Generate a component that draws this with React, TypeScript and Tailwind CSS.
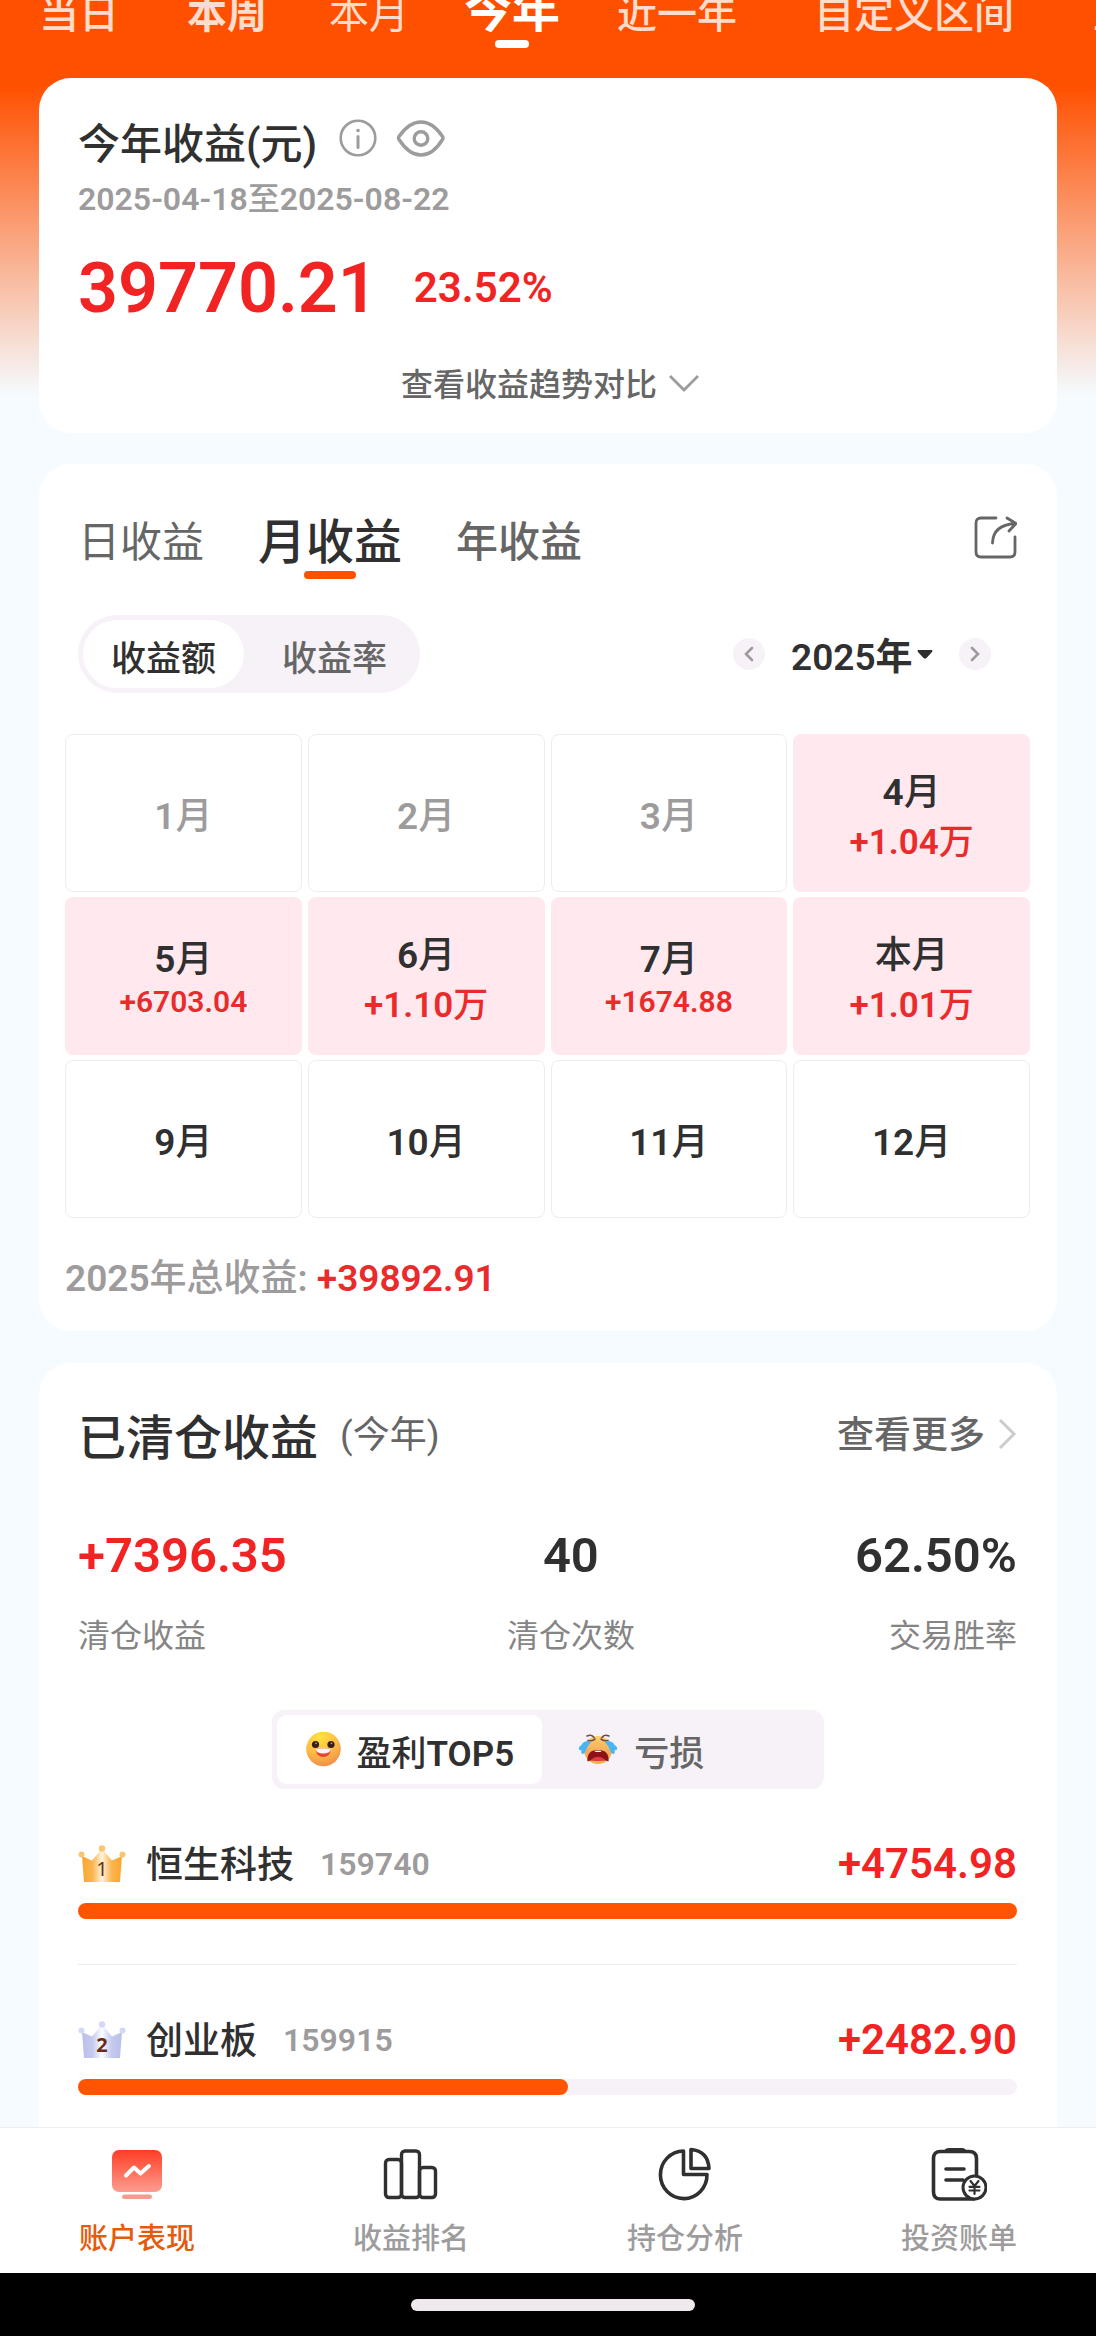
import React, { useState } from 'react';

const rangeTabs = [
  { label: '当日', className: 'w-[158px] text-[40px] font-medium' },
  { label: '本周', className: 'w-[138px] text-[40px] font-bold' },
  { label: '本月', className: 'w-[146px] text-[40px] font-normal' },
  { label: '今年', className: 'w-[140px] text-[48px] font-bold' },
  { label: '近一年', className: 'w-[190px] text-[40px] font-medium' },
  { label: '自定义区间', className: 'w-[284px] text-[40px] font-medium' },
  { label: '上月', className: 'w-[154px] text-[40px] font-medium' },
];

const months = [
  { label: '1月', muted: true },
  { label: '2月', muted: true },
  { label: '3月', muted: true },
  { label: '4月', value: '+1.04万' },
  { label: '5月', value: '+6703.04', long: true },
  { label: '6月', value: '+1.10万' },
  { label: '7月', value: '+1674.88', long: true },
  { label: '本月', value: '+1.01万' },
  { label: '9月' },
  { label: '10月' },
  { label: '11月' },
  { label: '12月' },
];

const stats = [
  { value: '+7396.35', label: '清仓收益', className: 'items-start', color: 'text-[#f22323]' },
  { value: '40', label: '清仓次数', className: 'items-center', color: 'text-[#303030]' },
  { value: '62.50%', label: '交易胜率', className: 'items-end', color: 'text-[#303030]' },
];

const topList = [
  { name: '恒生科技', code: '159740', amount: '+4754.98', percent: 100 },
  { name: '创业板', code: '159915', amount: '+2482.90', percent: 52.2 },
];

// Latin characters and digits are heavier, Chinese stays medium
const Mixed: React.FC<{ text: string }> = ({ text }) => (
  <span>
    {text.split(/([\x21-\x7e]+)/).map((part, index) => (
      index % 2 === 1 ? <b key={index} className="font-semibold">{part}</b> : part
    ))}
  </span>
);

const Crown: React.FC<{ rank: number }> = ({ rank }) => {
  const id = `crown-${rank}`;
  const edge = rank === 1 ? '#f9a72f' : '#b9c0ea';
  const dot = rank === 1 ? '#f8c670' : '#d3d8f6';
  return (
    <svg width="48" height="38" viewBox="0 0 48 38" className="shrink-0">
      <defs>
        <linearGradient id={id} x1="0" x2="1" y1="0" y2="0">
          <stop offset="0" stopColor={edge} />
          <stop offset="0.25" stopColor={edge} stopOpacity="0.85" />
          <stop offset="0.5" stopColor={rank === 1 ? '#fff6df' : '#ffffff'} />
          <stop offset="0.75" stopColor={edge} stopOpacity="0.85" />
          <stop offset="1" stopColor={edge} />
        </linearGradient>
      </defs>
      <path d="M4 11 L14 15.500 L22 6 Q24 4 26 6 L34 15.500 L44 11 L42 37 H6 Z" fill={`url(#${id})`} />
      <circle cx="3.500" cy="9.500" r="3" fill={dot} />
      <circle cx="24" cy="3.500" r="3.200" fill={dot} />
      <circle cx="44.500" cy="9.500" r="3" fill={dot} />
      <text
        x="24"
        y="31"
        textAnchor="middle"
        fontSize="20"
        fontFamily="Noto Sans, sans-serif"
        fontWeight={rank === 1 ? 400 : 700}
        fill="#6b2b18"
      >
        {rank}
      </text>
    </svg>
  );
};

const SmileFace = () => (
  <svg width="36" height="36" viewBox="0 0 36 36">
    <defs>
      <radialGradient id="smile" cx="0.4" cy="0.15" r="0.9">
        <stop offset="0" stopColor="#ffe23f" />
        <stop offset="0.55" stopColor="#fcbc45" />
        <stop offset="1" stopColor="#f08a4c" />
      </radialGradient>
    </defs>
    <circle cx="18.500" cy="17" r="17.300" fill="url(#smile)" />
    <circle cx="10.500" cy="12.500" r="3.600" fill="#3a1d1a" />
    <circle cx="26" cy="12.500" r="3.600" fill="#3a1d1a" />
    <circle cx="11" cy="11.300" r="0.900" fill="#b89a90" />
    <circle cx="26.500" cy="11.300" r="0.900" fill="#b89a90" />
    <path d="M10.500 17 Q18 15.500 26 17 Q25 25 18.200 25 Q11.500 25 10.500 17 Z" fill="#e8432e" />
    <path d="M10.500 17 Q18 15.500 26 17 Q25 21.500 18.200 21.500 Q11.500 21.500 10.500 17 Z" fill="#fff4fb" />
  </svg>
);

const CryFace = () => (
  <svg width="40" height="36" viewBox="0 0 40 36">
    <defs>
      <linearGradient id="cry" x1="0" x2="0" y1="0" y2="1">
        <stop offset="0" stopColor="#fcd06a" />
        <stop offset="0.6" stopColor="#f5a95a" />
        <stop offset="1" stopColor="#f2b250" />
      </linearGradient>
    </defs>
    <circle cx="20" cy="18" r="14" fill="url(#cry)" />
    <path d="M9 4 Q14 2 16 5.500 M31 4 Q26 2 24 5.500 M10 8.500 Q15 9.500 17 7 M30 8.500 Q25 9.500 23 7" fill="none" stroke="#6e4a45" strokeWidth="1.600" strokeLinecap="round" />
    <path d="M11 9 Q5 9 3.500 13 Q0 15 1 17.500 Q2 18.500 3.500 18 Q2.500 21.500 4.500 22 Q7 22 8 18 Q9.500 13.500 13 10.500 Z" fill="#49b5f5" />
    <path d="M29 9 Q35 9 36.500 13 Q40 15 39 17.500 Q38 18.500 36.500 18 Q37.500 21.500 35.500 22 Q33 22 32 18 Q30.500 13.500 27 10.500 Z" fill="#49b5f5" />
    <path d="M9.500 29.500 Q8.500 18 20 18 Q31.500 18 30.500 29.500 Q26 27.500 20 29 Q14 27.500 9.500 29.500 Z" fill="#8c1216" />
    <path d="M12.500 28 Q20 21.500 27.500 28 Q20 30 12.500 28 Z" fill="#e23b45" />
    <path d="M16.500 19 Q20 17.800 23.500 19 L22.500 20 H17.500 Z" fill="#fff" />
  </svg>
);

const PerformanceIcon = () => (
  <svg width="56" height="56" viewBox="0 0 56 56">
    <defs>
      <linearGradient id="perf" x1="0" x2="0" y1="0" y2="1">
        <stop offset="0" stopColor="#ff3d24" />
        <stop offset="1" stopColor="#fc9d90" />
      </linearGradient>
    </defs>
    <rect x="3" y="3" width="50" height="42" rx="7" fill="url(#perf)" />
    <path d="M17 28.500 L25 20.500 L31.500 26.500 L40 19" fill="none" stroke="#fff" strokeWidth="4" strokeLinecap="round" strokeLinejoin="round" />
    <rect x="13" y="47.500" width="30" height="4.500" rx="2.200" fill="#fa9a8d" />
  </svg>
);

const RankIcon = () => (
  <svg width="56" height="56" viewBox="0 0 56 56" fill="none" stroke="#303030" strokeWidth="3.400" strokeLinejoin="round">
    <rect x="2.500" y="12.500" width="16" height="38" rx="3.500" />
    <rect x="18.500" y="4" width="18" height="46.500" rx="3.500" />
    <rect x="36.500" y="20.500" width="16" height="30" rx="3.500" />
  </svg>
);

const PieIcon = () => (
  <svg width="56" height="56" viewBox="0 0 56 56" fill="none" stroke="#303030" strokeWidth="3.600" strokeLinejoin="round">
    <path d="M26.500 4 A23.300 23.800 0 1 0 50 27.500 H26.500 Z" />
    <path d="M34 2.500 V21.500 H52 Q51 4 34 2.500 Z" />
  </svg>
);

const BillIcon = () => (
  <svg width="56" height="56" viewBox="0 0 56 56" fill="none" stroke="#303030" strokeWidth="3.600" strokeLinecap="round" strokeLinejoin="round">
    <path d="M43 52 H9.500 Q2.500 52 2.500 45 V11.500 Q2.500 4.500 9.500 4.500 H38 Q45.500 4.500 45.500 11.500 V28" />
    <path d="M14 4.800 Q14.500 2 18 2 H31 Q34 2 34.500 4.800 Z" fill="#303030" strokeWidth="2" />
    <path d="M15 22 H33 M15 33 H32" />
    <circle cx="43.500" cy="40.500" r="11.500" fill="#fff" strokeWidth="3" />
    <path d="M39.500 34 L43.500 39 L47.500 34 M43.500 39 V47 M38.500 39.800 H48.500 M38.500 43.500 H48.500" strokeWidth="2.200" />
  </svg>
);

const navItems = [
  { label: '账户表现', icon: <PerformanceIcon /> },
  { label: '收益排名', icon: <RankIcon /> },
  { label: '持仓分析', icon: <PieIcon /> },
  { label: '投资账单', icon: <BillIcon /> },
];

const App: React.FC = () => {
  const [range, setRange] = useState('今年');
  const [metric, setMetric] = useState('收益额');
  const [board, setBoard] = useState('盈利');
  const [page, setPage] = useState('账户表现');

  return (
    <div className="flex h-screen flex-col overflow-hidden bg-[#f5fbff] font-['Roboto','Noto_Sans_CJK_SC',sans-serif] font-medium text-[#303030]">
      <main className="flex min-h-0 flex-1 flex-col overflow-hidden bg-[linear-gradient(to_bottom,#ff5000_85px,#f5fbff_395px)]">
        {/* Date range tabs */}
        <div className="flex h-[78px] shrink-0 items-start overflow-hidden">
          {rangeTabs.map((tab) => (
            <button
              key={tab.label}
              type="button"
              onClick={() => setRange(tab.label)}
              className={`relative -mt-2 h-14 shrink-0 whitespace-nowrap leading-[46px] ${tab.className} ${range === tab.label ? 'text-white' : 'text-[#ffdccb]'}`}
            >
              <span className={range === tab.label ? 'block -mt-2 h-14' : 'block h-14'}>{tab.label}</span>
              {range === tab.label && <span className="absolute bottom-0 left-1/2 h-2 w-[34px] -translate-x-1/2 rounded-full bg-white" />}
            </button>
          ))}
        </div>

        {/* Summary card */}
        <section className="mx-[39px] flex shrink-0 flex-col rounded-[32px] bg-white px-[39px] pb-7 pt-[39px]">
          <div className="flex items-start">
            <h1 className="text-[42px] font-medium leading-[56px]">今年收益(元)</h1>
            <button type="button" aria-label="说明" className="ml-[22px] flex h-[42px] items-center">
              <svg width="38" height="38" viewBox="0 0 38 38" fill="none" stroke="#9d9b9c">
                <circle cx="19" cy="19" r="17.300" strokeWidth="2.600" />
                <circle cx="19" cy="11.500" r="1.800" fill="#9d9b9c" stroke="none" />
                <path d="M19 17.500 V28.500" strokeWidth="3" strokeLinecap="round" />
              </svg>
            </button>
            <button type="button" aria-label="隐藏金额" className="ml-[18px] flex h-[42px] items-center">
              <svg width="50" height="38" viewBox="0 0 50 38" fill="none" stroke="#9d9b9c" strokeWidth="3.400">
                <path d="M4 17.500 Q14 3 26 3 Q38 3 47.500 17.500 Q48.500 19 47.500 20.500 Q38 36 26 36 Q14 36 4 20.500 Q3 19 4 17.500 Z" />
                <circle cx="26" cy="19.500" r="6.800" />
              </svg>
            </button>
          </div>
          <p className="mt-1 text-[32px] leading-[44px] text-[#9d9b9c]"><Mixed text="2025-04-18至2025-08-22" /></p>
          <div className="mt-[27px] flex items-center gap-9 font-semibold text-[#f22323]">
            <span className="text-[70px] leading-[80px]">39770.21</span>
            <span className="text-[42px] leading-[56px]">23.52%</span>
          </div>
          <button type="button" className="mt-[37px] flex items-center gap-3 self-center pl-1 text-[32px] leading-[40px] text-[#666]">
            查看收益趋势对比
            <svg width="30" height="20" viewBox="0 0 30 20" fill="none" stroke="#9d9b9c" strokeWidth="2.800">
              <path d="M1 1 L15 15 L29 1" />
            </svg>
          </button>
        </section>

        {/* Calendar card */}
        <section className="mx-[39px] mt-[31px] shrink-0 rounded-[32px] bg-white pb-7 pl-[26px] pr-[27px] pt-[51px]">
          <div className="flex items-start px-[13px]">
            <div className="flex h-[65px] flex-1 items-start gap-[54px] leading-[56px] text-[#666]">
              <button type="button" className="text-[42px] font-normal">日收益</button>
              <button type="button" className="flex flex-col items-center text-[48px] text-[#303030]">
                月收益
                <span className="h-2 w-[52px] rounded-full bg-[#ff5000]" />
              </button>
              <button type="button" className="text-[42px]">年收益</button>
            </div>
            <button type="button" aria-label="分享">
              <svg width="44" height="44" viewBox="0 0 44 44" fill="none" stroke="#666" strokeWidth="2.800" strokeLinecap="round" strokeLinejoin="round">
                <path d="M23 3 H8 Q3 3 3 8 V37 Q3 42 8 42 H37 Q42 42 42 37 V22" />
                <path d="M19.500 28 Q20 10 42 8.500 M34 3 L43 8.500 L36 16" />
              </svg>
            </button>
          </div>

          <div className="mt-[35px] flex items-center px-[13px]">
            <div className="flex gap-[10px] rounded-full bg-[#f6f2f7] p-[5px]">
              {['收益额', '收益率'].map((item) => (
                <button
                  key={item}
                  type="button"
                  onClick={() => setMetric(item)}
                  className={`h-[68px] rounded-full px-7 pt-3 text-[35px] leading-[48px] ${metric === item ? 'bg-white' : 'text-[#666]'}`}
                >
                  {item}
                </button>
              ))}
            </div>
            <div className="ml-auto mr-[26px] flex items-center">
              <button type="button" aria-label="上一年" className="flex size-8 items-center justify-center rounded-full bg-[#f6f2f7]">
                <svg width="10" height="16" viewBox="0 0 10 16" fill="none" stroke="#9d9b9c" strokeWidth="2.600" strokeLinecap="round">
                  <path d="M8 2 L2 8 L8 14" />
                </svg>
              </button>
              <div className="relative mx-[26px]">
                <select aria-label="年份" className="w-[142px] appearance-none bg-transparent pt-2 text-[37px] font-semibold leading-[48px] outline-none">
                  <option>2025年</option>
                </select>
                <svg width="16" height="9" viewBox="0 0 16 9" className="pointer-events-none absolute right-0 top-6" fill="#303030">
                  <path d="M1 0 H15 Q16 1 15 2 L9.500 8 Q8 9 6.500 8 L1 2 Q0 1 1 0 Z" />
                </svg>
              </div>
              <button type="button" aria-label="下一年" className="flex size-8 items-center justify-center rounded-full bg-[#f6f2f7]">
                <svg width="10" height="16" viewBox="0 0 10 16" fill="none" stroke="#9d9b9c" strokeWidth="2.600" strokeLinecap="round">
                  <path d="M2 2 L8 8 L2 14" />
                </svg>
              </button>
            </div>
          </div>

          <ul className="mt-[41px] grid grid-cols-4 gap-x-[6px] gap-y-[5px]">
            {months.map((month) => (
              <li
                key={month.label}
                className={`flex h-[158px] flex-col items-center justify-center rounded-lg ${month.value ? 'bg-[#ffe9ee]' : 'border border-[#eeedee] pt-2'}`}
              >
                <span className={`text-[37px] ${month.value && !month.long ? 'leading-[60px]' : 'leading-[52px]'} ${month.muted ? 'text-[#9d9b9c]' : ''}`}>
                  <Mixed text={month.label} />
                </span>
                {month.value && (
                  <span className={`text-[#e92b2b] ${month.long ? 'text-[30px] leading-8' : 'text-[35px] leading-10'}`}>
                    <Mixed text={month.value} />
                  </span>
                )}
              </li>
            ))}
          </ul>

          <p className="mt-[37px] text-[37px] leading-[48px] text-[#9d9b9c]">
            <Mixed text="2025年总收益:" /> <b className="font-semibold text-[#e92b2b]">+39892.91</b>
          </p>
        </section>

        {/* Closed positions card */}
        <section className="mx-[39px] mt-8 flex-1 shrink-0 rounded-t-[32px] bg-white pl-[39px] pr-10 pt-12">
          <div className="flex items-start leading-[56px]">
            <h2 className="text-[48px] font-medium">已清仓收益</h2>
            <span className="ml-[22px] text-[37px] font-normal leading-[50px] text-[#666]">(今年)</span>
            <a href="#more" className="ml-auto flex items-center gap-3 text-[37px] leading-[50px] text-[#666]">
              查看更多
              <svg width="20" height="34" viewBox="0 0 20 34" fill="none" stroke="#ccc" strokeWidth="3">
                <path d="M3 1 L17 15 L3 29" />
              </svg>
            </a>
          </div>

          <div className="mt-[61px] flex justify-between">
            {stats.map((item) => (
              <div key={item.label} className={`flex flex-col ${item.className}`}>
                <span className={`text-[49px] font-semibold leading-[56px] ${item.color}`}>{item.value}</span>
                <span className="mt-8 text-[32px] font-normal leading-10 text-[#858585]">{item.label}</span>
              </div>
            ))}
          </div>

          <div className="mx-auto mt-[54px] flex w-[552px] rounded-[12px] bg-[#f6f2f7] p-[5px] text-[35px]">
            <button
              type="button"
              onClick={() => setBoard('盈利')}
              className={`flex h-[69px] items-center gap-4 rounded-[10px] px-7 ${board === '盈利' ? 'bg-white' : 'text-[#666]'}`}
            >
              <SmileFace />
              <span className="pt-[10px] leading-[48px]"><Mixed text="盈利TOP5" /></span>
            </button>
            <button
              type="button"
              onClick={() => setBoard('亏损')}
              className={`flex h-[69px] items-center gap-4 rounded-[10px] px-9 ${board === '亏损' ? 'bg-white' : 'text-[#666]'}`}
            >
              <CryFace />
              <span className="pt-[10px] leading-[48px]">亏损</span>
            </button>
          </div>

          <ul>
            {topList.map((item, index) => (
              <li key={item.code} className="border-b border-[#eeedee] pb-[45px] pt-[47px]">
                <div className="flex h-14 items-center">
                  <Crown rank={index + 1} />
                  <span className="ml-5 pt-1 text-[37px] leading-[56px]">{item.name}</span>
                  <span className="ml-[26px] text-[32px] font-semibold leading-[56px] text-[#9d9b9c]">{item.code}</span>
                  <span className="ml-auto text-[42px] font-semibold leading-[56px] text-[#f22323]">{item.amount}</span>
                </div>
                <div className="mt-[11px] h-4 rounded-full bg-[#f6f2f7]">
                  <div className="h-4 rounded-full bg-[#ff5500]" style={{ width: `${item.percent}%` }} />
                </div>
              </li>
            ))}
          </ul>
        </section>
      </main>

      {/* Bottom navigation */}
      <nav className="z-10 grid h-[146px] shrink-0 grid-cols-4 border-t border-[#eeedee] bg-white">
        {navItems.map((item) => (
          <button
            key={item.label}
            type="button"
            onClick={() => setPage(item.label)}
            className={`flex flex-col items-center pt-[19px] text-[29px] leading-9 ${page === item.label ? 'text-[#e65a0c]' : 'text-[#9d9b9c]'}`}
          >
            {item.icon}
            <span className="mt-[18px]">{item.label}</span>
          </button>
        ))}
      </nav>
      <div className="flex h-[63px] shrink-0 items-center justify-center bg-black pl-[10px]">
        <div className="h-3 w-[284px] rounded-full bg-[#efe9ed]" />
      </div>
    </div>
  );
};

export default App;
